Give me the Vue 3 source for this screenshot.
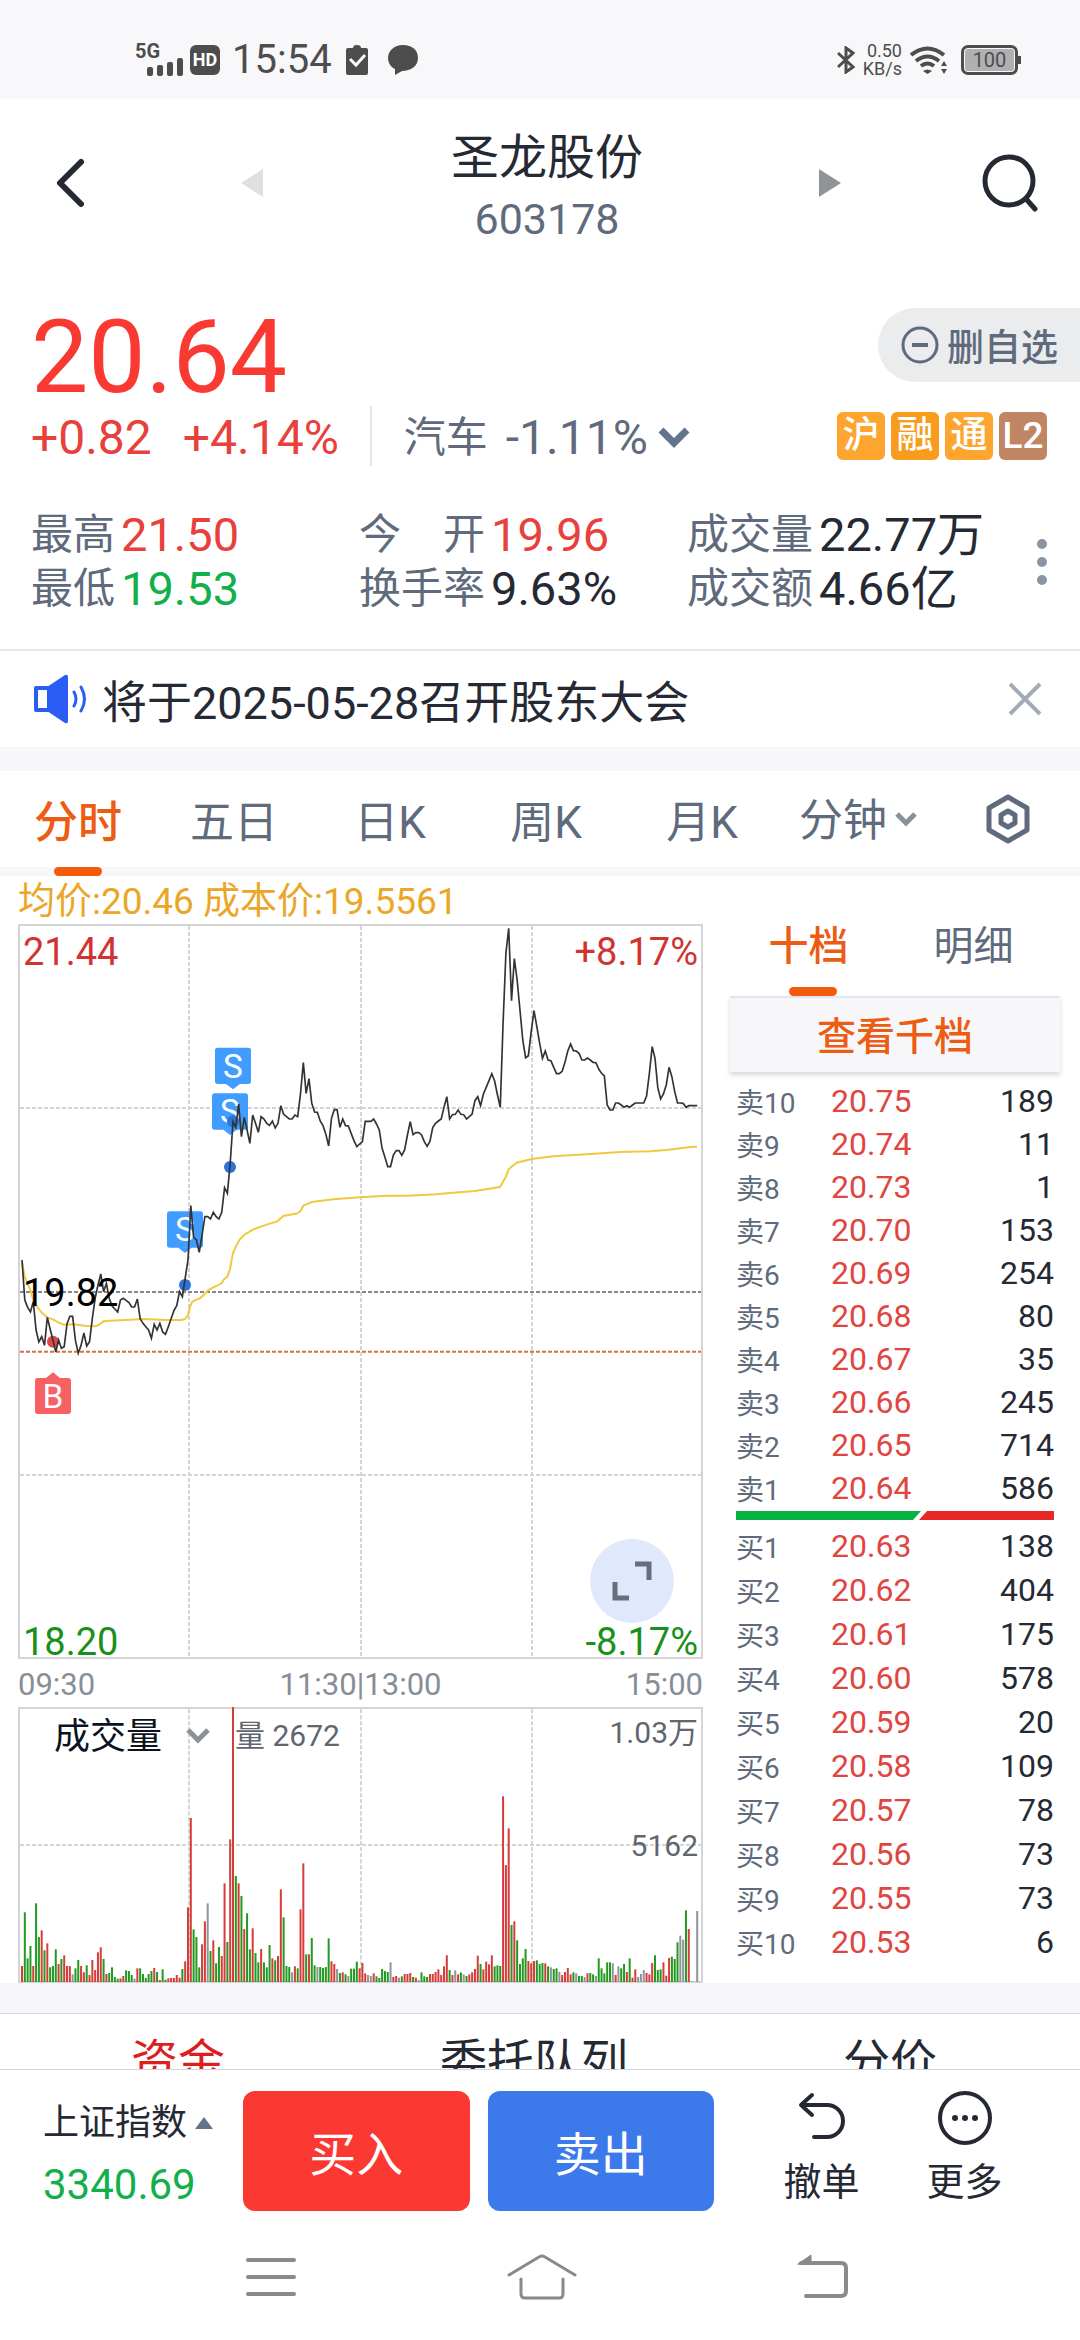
<script setup>
import {ref, computed} from 'vue'

const periods = ['分时', '五日', '日K', '周K', '月K']
const period = ref('分时')
const bookTab = ref('十档')

const badges = [
  {text: '沪', cls: 'hu'},
  {text: '融', cls: 'rong'},
  {text: '通', cls: 'hu'},
  {text: 'L2', cls: 'level'},
]

const stats = [
  {label: ['最', '高'], value: '21.50', cls: 'up'},
  {label: ['今', '开'], value: '19.96', cls: 'up', wide: true},
  {label: ['成', '交', '量'], value: '22.77万', wide: true},
  {label: ['最', '低'], value: '19.53', cls: 'down'},
  {label: ['换', '手', '率'], value: '9.63%', wide: true},
  {label: ['成', '交', '额'], value: '4.66亿', wide: true},
]

const sells = [
  ['卖10', '20.75', 189], ['卖9', '20.74', 11], ['卖8', '20.73', 1], ['卖7', '20.70', 153],
  ['卖6', '20.69', 254], ['卖5', '20.68', 80], ['卖4', '20.67', 35], ['卖3', '20.66', 245],
  ['卖2', '20.65', 714], ['卖1', '20.64', 586],
]
const buys = [
  ['买1', '20.63', 138], ['买2', '20.62', 404], ['买3', '20.61', 175], ['买4', '20.60', 578],
  ['买5', '20.59', 20], ['买6', '20.58', 109], ['买7', '20.57', 78], ['买8', '20.56', 73],
  ['买9', '20.55', 73], ['买10', '20.53', 6],
]

// 每分钟一个点，共241个
const trend = [
  1080, 1200, 1222, 1236, 1205, 1290, 1326, 1310, 1336, 1252, 1287, 1320, 1356, 1320, 1345, 1340, 1272, 1249, 1249, 1322,
  1360, 1336, 1299, 1338, 1325, 1255, 1195, 1155, 1122, 1175, 1150, 1195, 1218, 1227, 1236, 1200, 1195, 1201, 1208, 1221,
  1221, 1197, 1256, 1270, 1280, 1290, 1315, 1273, 1290, 1270, 1296, 1303, 1280, 1256, 1232, 1217, 1175, 1190, 1135, 1080,
  917, 1012, 1020, 1057, 1005, 950, 950, 957, 937, 950, 957, 937, 863, 880, 790, 665, 682, 612, 710, 652,
  690, 730, 645, 670, 697, 650, 657, 670, 676, 663, 684, 670, 617, 643, 650, 657, 657, 645, 650, 580,
  488, 580, 536, 610, 636, 637, 663, 677, 703, 738, 655, 629, 629, 682, 657, 677, 678, 700, 722, 740,
  732, 725, 664, 664, 664, 657, 672, 690, 745, 772, 800, 800, 765, 752, 752, 766, 750, 705, 665, 704,
  698, 698, 704, 725, 739, 724, 683, 670, 663, 657, 622, 590, 657, 644, 643, 630, 643, 644, 657, 650,
  642, 602, 590, 617, 582, 562, 542, 521, 543, 585, 622, 370, 160, 85, 302, 176, 240, 330, 420, 473,
  467, 395, 332, 380, 430, 475, 453, 480, 482, 502, 521, 521, 514, 487, 453, 432, 452, 453, 460, 480,
  480, 474, 480, 487, 488, 507, 520, 528, 615, 630, 630, 609, 609, 615, 622, 617, 622, 615, 609, 609,
  609, 609, 588, 520, 440, 475, 563, 597, 582, 555, 502, 530, 575, 609, 609, 610, 622, 617, 617, 617,
  617,
]
const average = '66,1085 74,1130 91,1170 100,1200 108,1215 125,1238 142,1252 160,1259 176,1268 192,1274 220,1273 260,1278 285,1279 295,1275 311,1264 330,1262 378,1260 430,1257 500,1260 545,1260 556,1256 564,1245 570,1220 577,1205 590,1198 600,1195 610,1186 625,1170 640,1162 665,1150 672,1138 682,1130 690,1108 694,1085 699,1060 708,1038 720,1018 735,1003 760,988 800,974 832,964 850,948 893,940 902,932 910,917 935,906 1000,898 1080,892 1160,887 1220,887 1310,883 1340,880 1425,873 1500,861 1517,832 1526,808 1550,788 1595,777 1660,769 1760,763 1860,756 1950,754 2000,750 2070,741 2091,740'

// r 涨 g 跌 n 平
const volume = `r828 g667 g805 g768 r828 g640 g741 r721 g781 r760 g832 g828 g778 r822 g807 r796 r828 r828 n853 g835
g810 r828 r847 g826 r855 r810 r840 r787 r772 g807 r852 g849 g832 g861 g866 r865 r858 g841 g843 g855
n866 r835 g835 g852 g864 g852 g843 r834 g846 r870 g838 g869 r865 r864 r864 r855 r863 g837 r814 r652
r384 g718 g741 g832 r763 r694 n640 g783 r751 g820 g771 r798 r580 g756 r448 r51 g558 r580 g618 r717
g670 g778 r715 g789 g817 r777 g817 g832 g765 r805 g811 r798 r598 g682 g828 g831 n847 r829 g835 r658
r520 g793 r793 g744 g826 n831 g831 g834 g831 g745 r814 r822 n837 g849 r847 g853 n858 g836 g836 g815
r835 r819 r850 n855 n858 r850 g859 g864 g837 g843 g846 n817 r861 r858 n863 g859 r852 r852 r849 g861
r863 n870 g847 g859 g861 r852 r852 r846 r838 r855 r829 r796 g840 r855 n841 r853 g847 n853 g858 r853
r847 r837 r797 g822 r838 r815 r823 r796 g829 g826 g828 r319 r525 r415 g705 r694 g751 g822 g805 g777
r813 r820 r813 g811 g822 g819 r820 g829 n832 g837 g835 n846 r855 r846 r834 r853 g847 n850 g858 g858
n861 r850 g849 g853 n858 g805 g835 g850 g817 g817 n820 r855 n829 g835 g822 r846 g805 r863 r838 n861
n852 n840 r849 r853 r819 g796 g840 g838 r817 r857 r804 g800 g807 g757 n737 n749 g661 r717 n874 n876
n663`

const STEP = 8.44
const minuteX = i => 66 + i * STEP

const trendPoints = computed(() => trend.map((y, i) => `${minuteX(i).toFixed(1)},${y}`).join(' '))
const bars = computed(() => volume.split(/\s+/).map((v, i) => ({
  cls: v[0],
  x: minuteX(i) - 3,
  y: Number(v.slice(1)),
})))

const sellFlags = [
  {x: 699, y: 443},
  {x: 690, y: 580},
  {x: 555, y: 934},
]
</script>

<template>
  <div class="page">
    <!-- 状态栏 -->
    <div class="status">
      <div class="status-left">
        <div class="signal">
          <span>5G</span>
          <svg width="36" height="18" viewBox="0 0 36 18" fill="#4d4d4d">
            <rect x="0" y="9" width="6" height="9" rx="2"/>
            <rect x="10" y="7" width="6" height="11" rx="2"/>
            <rect x="20" y="4" width="6" height="14" rx="2"/>
            <rect x="30" y="0" width="6" height="18" rx="2"/>
          </svg>
        </div>
        <span class="hd">HD</span>
        <span class="clock">15:54</span>
        <svg width="22" height="30" viewBox="0 0 22 30">
          <path d="M2 3h5q0-3 4-3t4 3h5q2 0 2 2v23q0 2-2 2H2q-2 0-2-2V5q0-2 2-2z" fill="#4d4d4d"/>
          <path d="M4 14l6 6 9-10" fill="none" stroke="#f8f8fa" stroke-width="3"/>
        </svg>
        <svg class="bubble" width="30" height="30" viewBox="0 0 30 30" fill="#4d4d4d">
          <path d="M15 0C6 0 0 6 0 13c0 5 3 9 7 11v6l7-4c9 0 16-5 16-13S24 0 15 0z"/>
        </svg>
      </div>
      <div class="status-right">
        <svg width="18" height="28" viewBox="0 0 18 28" fill="none" stroke="#4d4d4d" stroke-width="3">
          <path d="M1 7l15 14-7 5V2l7 5L1 21"/>
        </svg>
        <div class="speed"><span>0.50</span><span>KB/s</span></div>
        <svg width="38" height="28" viewBox="0 0 38 28">
          <g fill="none" stroke="#4d4d4d" stroke-width="4">
            <path d="M1 9q16.500-13 33 0"/>
            <path d="M6 15q11.500-9 23 0"/>
            <path d="M11 20q6.500-5 13 0"/>
          </g>
          <path d="M13 25q4.500-3 9 0l-4.500 3z" fill="#4d4d4d"/>
          <path d="M31 20l3-5 3 5zM31 23h6l-3 5z" fill="#4d4d4d"/>
        </svg>
        <div class="battery">100</div>
      </div>
    </div>

    <!-- 标题 -->
    <header class="header">
      <div class="side left">
        <button aria-label="返回">
          <svg width="28" height="50" viewBox="0 0 28 50" fill="none" stroke="#252934" stroke-width="6" stroke-linecap="round" stroke-linejoin="round">
            <path d="M25 4L4 25l21 21"/>
          </svg>
        </button>
        <button aria-label="上一只">
          <svg width="22" height="28" viewBox="0 0 22 28"><path d="M0 14L22 0v28z" fill="#dfe0e2"/></svg>
        </button>
      </div>
      <div class="name">
        <h1>圣龙股份</h1>
        <p>603178</p>
      </div>
      <div class="side right">
        <button aria-label="下一只">
          <svg width="22" height="28" viewBox="0 0 22 28"><path d="M22 14L0 0v28z" fill="#909498"/></svg>
        </button>
        <button aria-label="搜索">
          <svg width="56" height="58" viewBox="0 0 56 58" fill="none" stroke="#252934" stroke-width="5" stroke-linecap="round">
            <circle cx="27" cy="27" r="24"/>
            <path d="M45 46l8 9"/>
          </svg>
        </button>
      </div>
    </header>

    <!-- 行情 -->
    <section class="quote">
      <div class="row top">
        <span class="price">20.64</span>
        <button class="unfollow">
          <svg width="38" height="38" viewBox="0 0 38 38" fill="none" stroke="#5f6b7c" stroke-width="3">
            <circle cx="19" cy="19" r="17"/>
            <path d="M11 19h16" stroke-width="4"/>
          </svg>
          删自选
        </button>
      </div>
      <div class="row">
        <div class="change">
          <span class="up">+0.82</span>
          <span class="up">+4.14%</span>
          <button class="sector">
            <span class="cn">汽车</span>
            <span>-1.11%</span>
            <svg width="32" height="22" viewBox="0 0 32 22" fill="none" stroke="#64748b" stroke-width="7"><path d="M3 3l13 13L29 3"/></svg>
          </button>
        </div>
        <div class="badges">
          <span v-for="b in badges" :key="b.text" :class="b.cls">{{ b.text }}</span>
        </div>
      </div>
      <div class="stats">
        <div class="stats-grid">
          <div v-for="s in stats" :key="s.value" class="stat">
            <span class="label" :class="{wide: s.wide}"><i v-for="c in s.label" :key="c">{{ c }}</i></span>
            <span :class="s.cls">{{ s.value }}</span>
          </div>
        </div>
        <button class="more-dots" aria-label="更多指标">
          <svg width="10" height="46" viewBox="0 0 10 46" fill="#8b95a1">
            <circle cx="5" cy="5" r="5"/><circle cx="5" cy="23" r="5"/><circle cx="5" cy="41" r="5"/>
          </svg>
        </button>
      </div>
    </section>

    <!-- 公告 -->
    <div class="notice">
      <svg width="56" height="50" viewBox="0 0 56 50">
        <path d="M3 14h13v22H3z" fill="none" stroke="#2c5cf6" stroke-width="4" stroke-linejoin="round"/>
        <path d="M14 13L32 1q3-1 3 2v44q0 3-3 2L14 37z" fill="#2c5cf6"/>
        <path d="M41 18q4 7 0 14M48 13q7 12 0 24" fill="none" stroke="#2c5cf6" stroke-width="3" stroke-linecap="round"/>
      </svg>
      <p>将于2025-05-28召开股东大会</p>
      <button aria-label="关闭">
        <svg width="34" height="34" viewBox="0 0 34 34" stroke="#a3abb6" stroke-width="4"><path d="M2 2l30 30M32 2L2 32"/></svg>
      </button>
    </div>

    <!-- 周期 -->
    <nav class="periods">
      <button v-for="p in periods" :key="p" :class="{active: p === period}" @click="period = p">{{ p }}</button>
      <div class="minute">
        <select aria-label="分钟">
          <option>分钟</option>
        </select>
        <svg width="22" height="16" viewBox="0 0 22 16" fill="none" stroke="#8a9199" stroke-width="5"><path d="M2 3l9 9 9-9"/></svg>
      </div>
      <button aria-label="设置">
        <svg width="46" height="50" viewBox="0 0 46 50" fill="none" stroke="#5f6b7c" stroke-width="5" stroke-linejoin="round">
          <path d="M23 3l19 11v22L23 47 4 36V14z"/>
          <path d="M23 17l7 4v8l-7 4-7-4v-8z"/>
        </svg>
      </button>
    </nav>

    <main class="board">
      <div class="charts">
        <p class="avg">均价:20.46 成本价:19.5561</p>
        <div class="chart">
          <svg viewBox="54 72 2055 2205">
            <g class="grid">
              <path d="M567 78V2270M1083 78V2270M1596 78V2270M60 624H2103M60 1725H2103"/>
            </g>
            <path class="base-line" d="M60 1176H2103"/>
            <path class="cost-line" d="M60 1355H2103"/>
            <polyline class="average" :points="average"/>
            <g v-for="f in sellFlags" :key="f.y" class="sell-flag">
              <rect :x="f.x - 54" :y="f.y" width="108" height="109" rx="8"/>
              <path :d="`M${f.x - 22} ${f.y + 108}h44l-22 17z`"/>
              <text :x="f.x" :y="f.y + 90">S</text>
            </g>
            <g class="buy-flag">
              <rect x="105" y="1434" width="108" height="108" rx="8"/>
              <path d="M137 1435h44l-22-18z"/>
              <text x="159" y="1525">B</text>
            </g>
            <g class="sell-dot">
              <circle cx="699" cy="664" r="18"/>
              <circle cx="690" cy="801" r="18"/>
              <circle cx="555" cy="1155" r="18"/>
            </g>
            <circle class="buy-dot" cx="159" cy="1325" r="18"/>
            <polyline class="trend" :points="trendPoints"/>
            <rect class="frame" x="57" y="75" width="2049" height="2199"/>
          </svg>
          <span class="tick t-left high">21.44</span>
          <span class="tick t-right high">+8.17%</span>
          <span class="tick t-mid">19.82</span>
          <span class="tick b-left low">18.20</span>
          <span class="tick b-right low">-8.17%</span>
          <button class="expand" aria-label="全屏">
            <svg width="42" height="42" viewBox="0 0 42 42" fill="none" stroke="#64707d" stroke-width="5">
              <path d="M24 4h14v16M4 22v16h14"/>
            </svg>
          </button>
        </div>
        <div class="times"><span>09:30</span><span>11:30|13:00</span><span>15:00</span></div>
        <div class="chart">
          <svg viewBox="54 51 2055 828">
            <g class="grid">
              <path d="M567 58V876M1083 58V876M1596 58V876M60 465H2103"/>
            </g>
            <rect class="frame" x="57" y="54" width="2049" height="822"/>
            <rect v-for="(b, i) in bars" :key="i" :class="b.cls" :x="b.x" :y="b.y" width="6" :height="876 - b.y"/>
          </svg>
          <div class="vol-head">
            <select aria-label="指标">
              <option>成交量</option>
            </select>
            <svg width="24" height="16" viewBox="0 0 24 16" fill="none" stroke="#8a9199" stroke-width="5"><path d="M2 2l10 10L22 2"/></svg>
            <span>量 2672</span>
          </div>
          <span class="vol-tick v-top">1.03万</span>
          <span class="vol-tick v-mid">5162</span>
        </div>
      </div>

      <aside class="book">
        <div class="book-tabs">
          <button v-for="t in ['十档', '明细']" :key="t" :class="{active: t === bookTab}" @click="bookTab = t">{{ t }}</button>
        </div>
        <button class="thousand">查看千档</button>
        <table class="sell">
          <tbody>
            <tr v-for="r in sells" :key="r[0]"><th>{{ r[0] }}</th><td class="p">{{ r[1] }}</td><td>{{ r[2] }}</td></tr>
          </tbody>
        </table>
        <div class="ratio"><i class="green"></i><i class="red"></i></div>
        <table class="buy">
          <tbody>
            <tr v-for="r in buys" :key="r[0]"><th>{{ r[0] }}</th><td class="p">{{ r[1] }}</td><td>{{ r[2] }}</td></tr>
          </tbody>
        </table>
      </aside>
    </main>

    <div class="band"></div>
    <nav class="sections">
      <a href="#" class="on">资金</a>
      <a href="#">委托队列</a>
      <a href="#">分价</a>
    </nav>

    <!-- 底部交易栏 -->
    <footer class="trade">
      <div class="index">
        <button>上证指数
          <svg width="18" height="12" viewBox="0 0 18 12"><path d="M9 0l9 12H0z" fill="#64748b"/></svg>
        </button>
        <span>3340.69</span>
      </div>
      <button class="deal buy-btn">买入</button>
      <button class="deal sell-btn">卖出</button>
      <button class="act">
        <svg width="52" height="54" viewBox="0 0 52 54" fill="none" stroke="#252934" stroke-width="4" stroke-linecap="round" stroke-linejoin="round">
          <path d="M16 4L5 14l11 10M6 14h25a16 16 0 0 1 0 32H18"/>
        </svg>
        撤单
      </button>
      <button class="act">
        <svg width="54" height="54" viewBox="0 0 54 54">
          <circle cx="27" cy="27" r="25" fill="none" stroke="#252934" stroke-width="4"/>
          <g fill="#252934"><circle cx="17" cy="27" r="3"/><circle cx="27" cy="27" r="3"/><circle cx="37" cy="27" r="3"/></g>
        </svg>
        更多
      </button>
    </footer>

    <!-- 系统导航 -->
    <div class="sysnav">
      <button aria-label="最近任务">
        <svg width="50" height="44" viewBox="0 0 50 44" stroke="#8a8a8a" stroke-width="4" stroke-linecap="round"><path d="M2 5h46M2 22h46M2 39h46"/></svg>
      </button>
      <button aria-label="主屏幕">
        <svg width="70" height="46" viewBox="0 0 70 46" fill="none" stroke="#8a8a8a" stroke-width="3" stroke-linecap="round" stroke-linejoin="round">
          <path d="M2 21L32 3q3-2 6 0l30 18M14 25v15q0 4 4 4h34q4 0 4-4V25"/>
        </svg>
      </button>
      <button aria-label="后退">
        <svg width="62" height="46" viewBox="-10 0 62 46" fill="none" stroke="#8a8a8a" stroke-width="4" stroke-linecap="round">
          <path d="M4 9h40q5 0 5 5v23q0 5-5 5H9"/>
          <path d="M1 10L14 1v9z" fill="#8a8a8a" stroke-width="1"/>
        </svg>
      </button>
    </div>
  </div>
</template>

<style>
body {
  margin: 0;
  background: #fff;
}
</style>

<style scoped>
* {
  box-sizing: border-box;
}
.page {
  font-family: Roboto, "Noto Sans CJK SC", sans-serif;
  color: #252934;
  overflow: hidden;
}
button, select {
  border: 0;
  padding: 0;
  margin: 0;
  background: none;
  font: inherit;
  color: inherit;
  appearance: none;
}
svg {
  display: block;
  flex: none;
}
h1, p {
  margin: 0;
  font-weight: 400;
}
i {
  font-style: normal;
}
.up {
  color: #e8403a;
}
.down {
  color: #12b04a;
}

/* 状态栏 */
.status {
  height: 99px;
  padding: 21px 62px 0 135px;
  background: #f8f8fa;
  color: #4d4d4d;
  display: flex;
  justify-content: space-between;
  align-items: center;
}
.status-left, .status-right {
  display: flex;
  align-items: center;
}
.signal {
  width: 48px;
  margin-right: 7px;
}
.signal span {
  display: block;
  font-size: 20px;
  line-height: 14px;
  font-weight: 700;
}
.signal svg {
  margin-left: 12px;
}
.hd {
  width: 30px;
  height: 30px;
  border-radius: 6px;
  background: #4d4d4d;
  color: #fff;
  font-size: 18px;
  line-height: 30px;
  font-weight: 700;
  text-align: center;
}
.clock {
  margin: 0 14px 0 12px;
  font-size: 40px;
  line-height: 40px;
}
.bubble {
  margin-left: 20px;
}
.status-right {
  gap: 8px;
}
.speed {
  font-size: 18px;
  line-height: 18px;
  text-align: right;
}
.speed span {
  display: block;
}
.battery {
  position: relative;
  width: 57px;
  height: 30px;
  margin-left: 5px;
  border: 3px solid #4d4d4d;
  border-radius: 7px;
  background: #b0b0b2;
  box-shadow: inset 0 0 0 1px #f8f8fa;
  font-size: 20px;
  line-height: 24px;
  text-align: center;
}
.battery::after {
  content: "";
  position: absolute;
  right: -6px;
  top: 8px;
  width: 3px;
  height: 8px;
  background: #4d4d4d;
}

/* 标题 */
.header {
  height: 168px;
  padding: 0 42px 0 56px;
  display: grid;
  grid-template-columns: 1fr auto 1fr;
  align-items: center;
}
.side {
  display: flex;
  align-items: center;
  justify-content: space-between;
}
.left {
  padding-right: 188px;
}
.right {
  padding-left: 176px;
}
.name {
  text-align: center;
}
.name h1 {
  padding-top: 5px;
  font-size: 48px;
  line-height: 66px;
}
.name p {
  font-size: 43px;
  line-height: 56px;
  color: #5f6b7c;
}

/* 行情 */
.quote {
  padding: 41px 0 33px 31px;
  border-bottom: 2px solid #e6e6e6;
}
.row {
  display: flex;
  justify-content: space-between;
  align-items: center;
  height: 60px;
}
.top {
  height: 98px;
  align-items: flex-start;
}
.price {
  font-size: 102px;
  line-height: 98px;
  color: #f93a33;
}
.unfollow {
  display: flex;
  align-items: center;
  gap: 8px;
  height: 74px;
  padding: 0 22px 0 23px;
  border-radius: 37px 0 0 37px;
  background: #ebecee;
  color: #5f6b7c;
  font-size: 37px;
  font-weight: 500;
}
.change {
  display: flex;
  align-items: center;
  gap: 31px;
  font-size: 48px;
  line-height: 56px;
}
.change > span {
  padding-top: 4px;
}
.sector {
  display: flex;
  align-items: center;
  gap: 10px;
  padding: 4px 0 0 32px;
  border-left: 2px solid #e3e5ea;
  color: #5f6b7c;
}
.cn {
  font-size: 42px;
  margin-right: 8px;
}
.badges {
  display: flex;
  gap: 6px;
  padding-right: 33px;
}
.badges span {
  width: 48px;
  height: 48px;
  border-radius: 6px;
  color: #fff;
  font-size: 37px;
  line-height: 48px;
  font-weight: 500;
  text-align: center;
}
.hu {
  background: #fea530;
}
.rong {
  background: #f99c1e;
}
.level {
  background: #c08562;
}
.stats {
  display: flex;
  align-items: center;
  margin-top: 42px;
}
.stats-grid {
  flex: 1;
  display: grid;
  grid-template-columns: 328fr 328fr 350fr;
}
.stat {
  display: flex;
  font-size: 47px;
  line-height: 54px;
}
.label {
  display: flex;
  justify-content: space-between;
  width: 84px;
  margin-right: 6px;
  color: #5f6b7c;
  font-size: 42px;
}
.wide {
  width: 126px;
}
.more-dots {
  padding-right: 33px;
}

/* 公告 */
.notice {
  height: 96px;
  padding: 0 38px 0 33px;
  display: flex;
  align-items: center;
}
.notice p {
  flex: 1;
  margin-left: 13px;
  font-size: 45px;
}

/* 周期 */
.periods {
  height: 129px;
  border-top: 24px solid #f7f7f9;
  border-bottom: 9px solid #f7f7f9;
  display: grid;
  grid-template-columns: repeat(6, 13fr) 12fr;
  color: #5f6b7c;
  font-size: 44px;
}
.periods > * {
  position: relative;
  display: flex;
  align-items: center;
  justify-content: center;
}
.minute {
  gap: 8px;
}
.minute select {
  padding-top: 4px;
}
.active {
  color: #ec5c12;
  font-weight: 500;
}
.active::after {
  content: "";
  position: absolute;
  bottom: -9px;
  left: 50%;
  width: 48px;
  height: 9px;
  margin-left: -24px;
  border-radius: 5px;
  background: #f35a0c;
}

/* 图表 */
.board {
  display: grid;
  grid-template-columns: 685fr 330fr;
  gap: 27px;
  padding: 0 20px 0 18px;
}
.avg {
  padding-top: 4px;
  color: #eba628;
  font-size: 37px;
  line-height: 44px;
}
.chart {
  position: relative;
}
.chart > svg {
  width: 100%;
  height: auto;
}
.chart > svg path, .chart polyline, .frame {
  fill: none;
}
.frame {
  stroke: #d4d4d4;
  stroke-width: 6;
}
.grid {
  stroke: #d4d4d4;
  stroke-width: 6;
  stroke-dasharray: 12 6;
}
.base-line {
  stroke: #85878a;
  stroke-width: 6;
  stroke-dasharray: 12 6;
}
.cost-line {
  stroke: #d4733f;
  stroke-width: 6;
  stroke-dasharray: 12 6;
}
.average {
  stroke: #f0ca3e;
  stroke-width: 6;
}
.trend {
  stroke: #333;
  stroke-width: 5;
}
.chart .sell-flag, .chart .sell-flag path {
  fill: #409cff;
}
.chart .buy-flag, .chart .buy-flag path {
  fill: #f76164;
}
.sell-flag text, .buy-flag text {
  fill: #fff;
  font-size: 100px;
  text-anchor: middle;
}
.sell-dot {
  fill: #2d74d8;
}
.buy-dot {
  fill: #e04848;
}
.tick {
  position: absolute;
  font-size: 38px;
  line-height: 38px;
}
.t-left, .t-mid, .b-left {
  left: 5px;
}
.t-right, .b-right {
  right: 5px;
}
.t-left, .t-right {
  top: 9px;
}
.b-left, .b-right {
  bottom: -2px;
}
.t-mid {
  top: 50%;
  margin-top: -18px;
  color: #000;
}
.high {
  color: #d03430;
}
.low {
  color: #1a8f1a;
}
.expand {
  position: absolute;
  right: 29px;
  bottom: 36px;
  width: 84px;
  height: 84px;
  border-radius: 50%;
  background: #dfe9fb;
  display: flex;
  align-items: center;
  justify-content: center;
}
.times {
  display: flex;
  justify-content: space-between;
  padding-top: 4px;
  color: #868e97;
  font-size: 31px;
  line-height: 44px;
}
.vol-head {
  position: absolute;
  left: 36px;
  top: 8px;
  display: flex;
  align-items: center;
  color: #5f666d;
  font-size: 30px;
  line-height: 40px;
}
.vol-head select {
  padding-top: 2px;
  color: #0b1220;
  font-size: 36px;
}
.vol-head svg {
  margin: 0 25px 0 23px;
}
.vol-tick {
  position: absolute;
  right: 5px;
  color: #5f666d;
  font-size: 30px;
  line-height: 40px;
}
.v-top {
  top: 6px;
}
.v-mid {
  top: 50%;
  margin-top: -19px;
}
.r {
  fill: #d63c3a;
}
.g {
  fill: #22991f;
}
.n {
  fill: #8f959b;
}

/* 盘口 */
.book-tabs {
  height: 120px;
  display: grid;
  grid-template-columns: 1fr 1fr;
  color: #5f6b7c;
  font-size: 40px;
}
.book-tabs button {
  position: relative;
  padding: 14px 8px 0 0;
}
.book-tabs .active::after {
  bottom: 0;
}
.thousand {
  width: 100%;
  height: 76px;
  padding-bottom: 4px;
  border-top: 2px solid #e1e6ee;
  background: #f7f7f9;
  box-shadow: 0 3px 5px rgba(0, 0, 0, .16);
  color: #ec5c12;
  font-size: 39px;
  font-weight: 500;
}
table {
  width: 100%;
  padding: 0 6px;
  border-spacing: 0;
  table-layout: fixed;
  font-size: 32px;
}
th, td {
  padding: 0;
  text-align: right;
}
th {
  width: 95px;
  color: #5f6b7c;
  font-size: 28px;
  font-weight: 400;
  text-align: left;
}
.p {
  width: 84px;
  color: #e0453f;
  text-align: left;
}
.sell {
  margin-top: 7px;
}
.sell tr {
  height: 43px;
}
.buy tr {
  height: 44px;
}
.ratio {
  display: flex;
  height: 9px;
  margin: 2px 6px 4px;
}
.green {
  flex: 185;
  background: #05b244;
  clip-path: polygon(0 0, 100% 0, calc(100% - 8px) 100%, 0 100%);
}
.red {
  flex: 135;
  margin-left: -2px;
  background: #e62826;
  clip-path: polygon(8px 0, 100% 0, 100% 100%, 0 100%);
}

/* 下方分类 */
.band {
  height: 31px;
  background: #f7f7f9;
  border-bottom: 1px solid #d5d5dc;
}
.sections {
  height: 55px;
  overflow: hidden;
  padding: 16px 12px 0 0;
  display: grid;
  grid-template-columns: repeat(3, 1fr);
  text-align: center;
  font-size: 47px;
  line-height: 64px;
}
.sections a {
  color: #252934;
  text-decoration: none;
}
.sections .on {
  color: #dc1f1c;
}

/* 底部 */
.trade {
  position: relative;
  padding: 21px 44px 3px 43px;
  border-top: 1px solid #d5d5dc;
  background: #fff;
  display: flex;
}
.index {
  width: 200px;
  padding-top: 10px;
  font-size: 36px;
  line-height: 44px;
}
.index button {
  display: flex;
  align-items: center;
  gap: 8px;
}
.index span {
  display: block;
  padding-top: 18px;
  color: #12b04a;
  font-size: 42px;
}
.deal {
  flex: 1;
  height: 120px;
  padding-bottom: 2px;
  border-radius: 12px;
  color: #fff;
  font-size: 47px;
}
.buy-btn {
  margin-right: 18px;
  background: #fb3831;
}
.sell-btn {
  margin-right: 36px;
  background: #3c7aec;
}
.act {
  width: 143px;
  display: flex;
  flex-direction: column;
  align-items: center;
  gap: 10px;
  font-size: 38px;
  line-height: 54px;
}
.sysnav {
  height: 126px;
  padding: 0 231px 0 246px;
  display: flex;
  align-items: center;
  justify-content: space-between;
}
</style>
